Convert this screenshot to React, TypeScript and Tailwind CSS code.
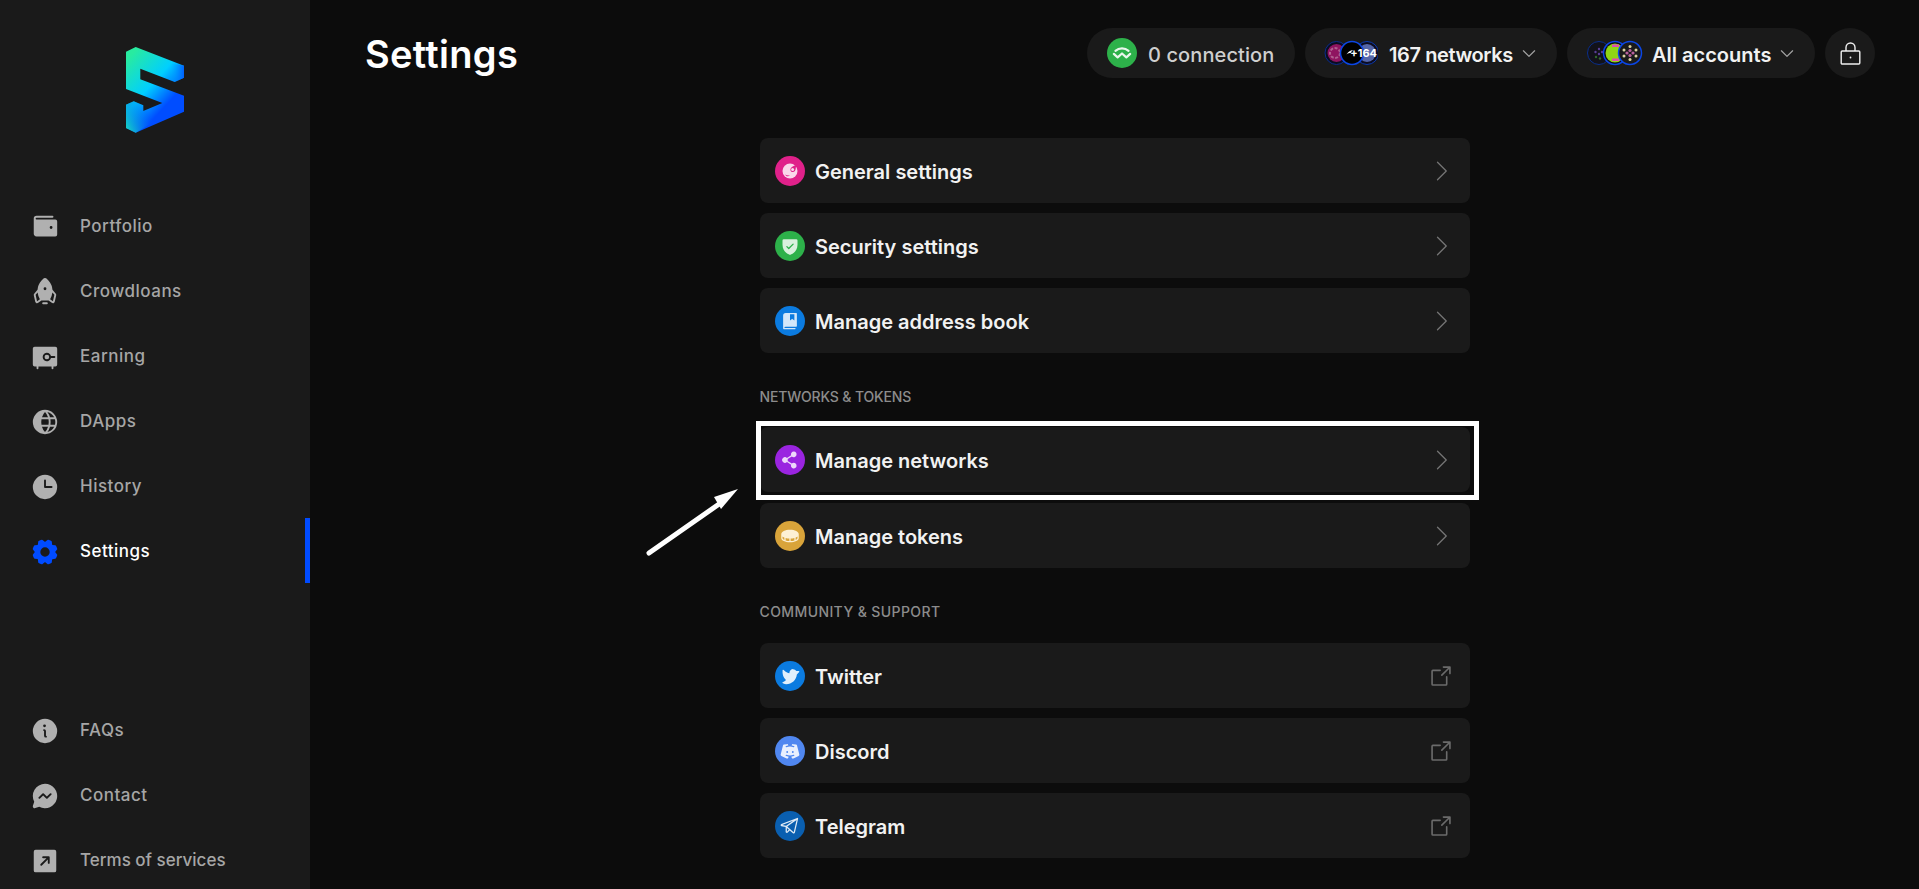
import React from "react";
import {
  PiWalletFill, PiRocketFill, PiVaultFill, PiGlobeFill, PiClockFill, PiGearFill, PiInfoFill,
  PiMessengerLogoFill, PiArrowSquareUpRightFill, PiCaretRightLight, PiCaretDown,
  PiShieldCheckFill, PiBookBookmarkFill, PiShareNetworkFill, PiCoinFill,
  PiTwitterLogoFill, PiDiscordLogoFill, PiTelegramLogo, PiArrowSquareOut,
} from "react-icons/pi";

const Logo = () => (
  <svg width="58" height="86" viewBox="126 47 58 86">
    <defs>
      <linearGradient id="lg" gradientUnits="userSpaceOnUse" x1="126" y1="60" x2="178" y2="108">
        <stop offset="0" stopColor="#28eba0" />
        <stop offset="0.5" stopColor="#00cfff" />
        <stop offset="0.85" stopColor="#004dff" />
      </linearGradient>
      <linearGradient id="lg2" gradientUnits="userSpaceOnUse" x1="126" y1="125" x2="150" y2="112">
        <stop offset="0" stopColor="#12c8c8" />
        <stop offset="1" stopColor="#004dff" stopOpacity="0" />
      </linearGradient>
      <linearGradient id="lg3" gradientUnits="userSpaceOnUse" x1="170" y1="72" x2="184" y2="72">
        <stop offset="0" stopColor="#00b8ff" stopOpacity="0" />
        <stop offset="1" stopColor="#0062ff" />
      </linearGradient>
    </defs>
    <polygon fill="url(#lg)" points="126,51.7 135.7,47 184,65.7 184,77.7 174.7,82 140.3,68.7 140.3,79.3 184,95.7 184,111.7 135.7,132.7 126,128 126,104.7 133.7,101.3 143.3,105.3 143.3,111 162.3,103 126,89" />
    <polygon fill="url(#lg2)" points="126,104.7 133.7,101.3 143.3,105.3 143.3,111 162,103 170,112 135.7,132.7 126,128" />
    <polygon fill="url(#lg3)" points="168,63 184,65.7 184,77.7 174.7,82 168,79" />
  </svg>
);

const navTop = [
  { label: "Portfolio", Icon: PiWalletFill },
  { label: "Crowdloans", Icon: PiRocketFill },
  { label: "Earning", Icon: PiVaultFill },
  { label: "DApps", Icon: PiGlobeFill },
  { label: "History", Icon: PiClockFill },
  { label: "Settings", Icon: PiGearFill, active: true },
];
const navBottom = [
  { label: "FAQs", Icon: PiInfoFill },
  { label: "Contact", Icon: PiMessengerLogoFill },
  { label: "Terms of services", Icon: PiArrowSquareUpRightFill, tight: true },
];

type NavProps = { label: string; Icon: React.ComponentType<{ size?: number; className?: string }>; active?: boolean; tight?: boolean };

const NavItem = ({ label, Icon, active, tight }: NavProps) => (
  <div className={`relative flex h-[65px] shrink-0 items-center pl-[30px] ${active ? "text-white" : "text-[#a6a6a6]"}`}>
    <Icon size={30} className={active ? "text-[#004bff]" : "text-[#b0b0b0]"} />
    <span className={`ml-[20px] pt-[1px] text-[17px] font-medium ${tight ? "tracking-normal" : "tracking-[0.5px]"}`}>{label}</span>
    {active && <span className="absolute -top-px right-0 h-full w-[5px] bg-[#004bff]" />}
  </div>
);

const GeneralIcon = ({ size = 20 }: { size?: number; color?: string }) => (
  <svg width={size} height={size} viewBox="0 0 20 20">
    <circle cx="10" cy="10" r="7.5" fill="#fff" fillOpacity="0.82" />
    <path d="M17.5 3.5c-2 1-4 1.2-5.6 2.4-1.5 1.1-2 3-1 4.3 1.1 1.3 3 1.2 4-.2.9-1.2.8-2.7 1-4 .2-.9.7-1.7 1.6-2.5z" fill="#e0218a" />
    <circle cx="12.6" cy="8.6" r="1.5" fill="#fff" fillOpacity="0.85" />
    <path d="M5 13.5c1.5.9 3 1.3 5 1-1.4 1.2-3.600 1.300-5-1z" fill="#e0218a" />
  </svg>
);

const RowIcon = ({ bg, fg, Icon, size = 20 }: { bg: string; fg: string; Icon: React.ComponentType<{ size?: number; color?: string }>; size?: number }) => (
  <span className={`flex h-[30px] w-[30px] shrink-0 items-center justify-center rounded-full ${bg}`}>
    <Icon size={size} color={fg} />
  </span>
);

type RowProps = { label: string; bg: string; Icon: React.ComponentType<{ size?: number; color?: string }>; fg?: string; ext?: boolean };

const Row = ({ label, bg, Icon, fg = "rgba(255,255,255,0.82)", ext }: RowProps) => (
  <div className="flex h-[65px] items-center rounded-[8px] bg-[#1a1a1a] pl-[15px] pr-[15px]">
    <RowIcon bg={bg} fg={fg} Icon={Icon} />
    <span className="ml-[10.5px] flex-1 pt-[3px] text-[20px] font-semibold text-[#f2f2f2]">{label}</span>
    {ext ? <PiArrowSquareOut size={26} className="mr-[1px] text-[#6b6b6b]" /> : <PiCaretRightLight size={28} className="text-[#757575]" />}
  </div>
);

const Label = ({ children, className }: { children: React.ReactNode; className: string }) => (
  <div className={`flex h-[20px] items-center text-[14px] font-medium text-[#8c8c8c] ${className}`}>{children}</div>
);

const WcIcon = () => (
  <svg width="24" height="24" viewBox="0 0 22 22" fill="none" stroke="#fff" strokeOpacity="0.9" strokeWidth="2" strokeLinecap="round" strokeLinejoin="round">
    <path d="M5 9c3.4-3 8.6-3 12 0" />
    <path d="M3.500 11.800 7 15l4-3.600 4 3.600 3.500-3.200" />
  </svg>
);

const LockIcon = () => (
  <svg width="21" height="23" viewBox="0 0 21 23" fill="none" stroke="#f0f0f0" strokeWidth="1.4">
    <rect x="1.200" y="9" width="18.600" height="13" rx="1" />
    <path d="M6 9V5.500a4.500 4.500 0 0 1 9 0V9" />
    <circle cx="10.500" cy="15.500" r="0.9" fill="#f0f0f0" stroke="none" />
  </svg>
);

const NetworkAvatars = () => (
  <svg width="54" height="26" viewBox="0 0 54 26">
    <circle cx="12.5" cy="13" r="11.5" fill="#0c0c20" stroke="#0a2f8c" strokeWidth="1" />
    <circle cx="12.5" cy="13" r="9" fill="#8f1460" />
    <circle cx="11" cy="13" r="5" fill="none" stroke="#b06090" strokeWidth="2" strokeDasharray="3 1.5" />
    <circle cx="43" cy="13" r="11.5" fill="#0c0c20" stroke="#0a3ab0" strokeWidth="1" />
    <circle cx="43" cy="13" r="9" fill="#5566a8" />
    <circle cx="28" cy="13" r="11.5" fill="#000" stroke="#0b46e6" strokeWidth="1.5" />
    <path d="M22 15c2-3 4-4.500 7-5-1 1-2 2-2.500 3.200-1.500-.4-3 .4-4.500 1.800z" fill="#fff" />
  </svg>
);

const AccountAvatars = () => (
  <svg width="56" height="26" viewBox="0 0 56 26">
    <circle cx="12" cy="13" r="11.500" fill="#12121a" stroke="#0a2f8c" strokeWidth="1" />
    <g fill="#5a3f98">
      <circle cx="12" cy="9" r="1.200" /><circle cx="8.500" cy="12" r="1.200" /><circle cx="12" cy="14" r="1.200" /><circle cx="15" cy="12" r="1.200" />
    </g>
    <g fill="#33692a"><circle cx="13" cy="18.500" r="1.200" /><circle cx="9" cy="17" r="1.200" /></g>
    <circle cx="28" cy="13" r="11.500" fill="#0c0c0c" stroke="#0b46e6" strokeWidth="1.500" />
    <circle cx="28" cy="13" r="9.500" fill="#8fd614" />
    <rect x="25" y="4.500" width="7" height="2.500" fill="#e04ab0" />
    <rect x="25" y="18.500" width="7" height="2.500" fill="#e04ab0" />
    <circle cx="43" cy="13" r="11.500" fill="#1a1a1a" stroke="#0b46e6" strokeWidth="1.500" />
    <g fill="#d8d0a0">
      <circle cx="43" cy="6.500" r="1.500" /><circle cx="43" cy="19.500" r="1.500" /><circle cx="37" cy="10" r="1.500" /><circle cx="49" cy="10" r="1.500" /><circle cx="37" cy="16" r="1.500" /><circle cx="49" cy="16" r="1.500" />
    </g>
    <g fill="#b8609c">
      <circle cx="43" cy="10.500" r="1.600" /><circle cx="43" cy="15.500" r="1.600" /><circle cx="40" cy="13" r="1.600" /><circle cx="46" cy="13" r="1.600" />
    </g>
  </svg>
);

export default function App() {
  return (
    <div className="flex h-[889px] overflow-hidden bg-[#0c0c0c] [font-family:Inter,sans-serif]">
      <aside className="flex h-full w-[310px] shrink-0 flex-col bg-[#1a1a1a]">
        <div className="flex h-[194px] shrink-0 justify-center pt-[47px]">
          <Logo />
        </div>
        {navTop.map((n) => <NavItem key={n.label} {...n} />)}
        <div className="mt-[114px] shrink-0">
          {navBottom.map((n) => <NavItem key={n.label} {...n} />)}
        </div>
      </aside>
      <main className="flex-1">
        <header className="mt-[28px] flex h-[50px] items-center justify-between pl-[55px] pr-[44px]">
          <h1 className="pt-[2px] text-[38px] font-semibold tracking-[0.3px] text-white">Settings</h1>
          <div className="flex items-center gap-[10px]">
            <div className="flex h-[50px] w-[208px] items-center rounded-full bg-[#1a1a1a] pl-[20px]">
              <span className="flex h-[30px] w-[30px] items-center justify-center rounded-full bg-[#2db14a]"><WcIcon /></span>
              <span className="ml-[11px] pt-[3px] text-[20px] font-medium tracking-[0.1px] text-[#cfcfcf]">0 connection</span>
            </div>
            <div className="flex h-[50px] w-[252px] items-center rounded-full bg-[#1a1a1a] pl-[19px]">
              <span className="relative flex h-[26px] w-[54px]">
                <NetworkAvatars />
                <span className="absolute right-[1px] top-[5px] text-[11px] font-bold leading-4 text-white">+164</span>
              </span>
              <span className="ml-[11px] pt-[3px] text-[20px] font-semibold tracking-[-0.4px] text-[#f2f2f2]">167 networks</span>
              <PiCaretDown size={18} className="ml-auto mr-[19px] text-[#a6a6a6]" />
            </div>
            <div className="flex h-[50px] w-[248px] items-center rounded-full bg-[#1a1a1a] pl-[20px]">
              <AccountAvatars />
              <span className="ml-[9px] pt-[3px] text-[20px] font-semibold text-[#f2f2f2]">All accounts</span>
              <PiCaretDown size={18} className="ml-auto mr-[19px] text-[#a6a6a6]" />
            </div>
            <div className="flex h-[50px] w-[50px] items-center justify-center rounded-full bg-[#1a1a1a]">
              <LockIcon />
            </div>
          </div>
        </header>
        <section className="mx-auto mt-[60px] flex w-[710px] flex-col">
          <div className="flex flex-col gap-[10px]">
            <Row label="General settings" bg="bg-[#e0218a]" Icon={GeneralIcon} />
            <Row label="Security settings" bg="bg-[#2db14a]" Icon={PiShieldCheckFill} />
            <Row label="Manage address book" bg="bg-[#0b7be0]" Icon={PiBookBookmarkFill} />
          </div>
          <Label className="mb-[21px] mt-[33px] tracking-[-0.15px]">NETWORKS &amp; TOKENS</Label>
          <div className="flex flex-col gap-[11px]">
            <div className="relative">
              <Row label="Manage networks" bg="bg-[#9a24e0]" Icon={PiShareNetworkFill} />
              <div className="absolute -bottom-2 -left-1 -right-[9px] -top-[6px] border-[5px] border-white" />
              <svg className="absolute -left-[116px] top-[60px]" width="100" height="72" viewBox="0 0 100 72" fill="none">
                <line x1="5" y1="66" x2="78" y2="15" stroke="#fff" strokeWidth="5" strokeLinecap="round" />
                <polygon points="94,2 70,10 77,22" fill="#fff" />
              </svg>
            </div>
            <Row label="Manage tokens" bg="bg-[#d9a43a]" Icon={PiCoinFill} fg="rgba(255,244,220,0.95)" />
          </div>
          <Label className="mb-[22px] mt-[33px] tracking-[0.4px]">COMMUNITY &amp; SUPPORT</Label>
          <div className="flex flex-col gap-[10px]">
            <Row ext label="Twitter" bg="bg-[#0b7be0]" Icon={PiTwitterLogoFill} fg="rgba(255,255,255,0.88)" />
            <Row ext label="Discord" bg="bg-[#5087f0]" Icon={PiDiscordLogoFill} fg="rgba(255,255,255,0.88)" />
            <Row ext label="Telegram" bg="bg-[#0a5fb0]" Icon={PiTelegramLogo} fg="rgba(255,255,255,0.88)" />
          </div>
        </section>
      </main>
    </div>
  );
}
